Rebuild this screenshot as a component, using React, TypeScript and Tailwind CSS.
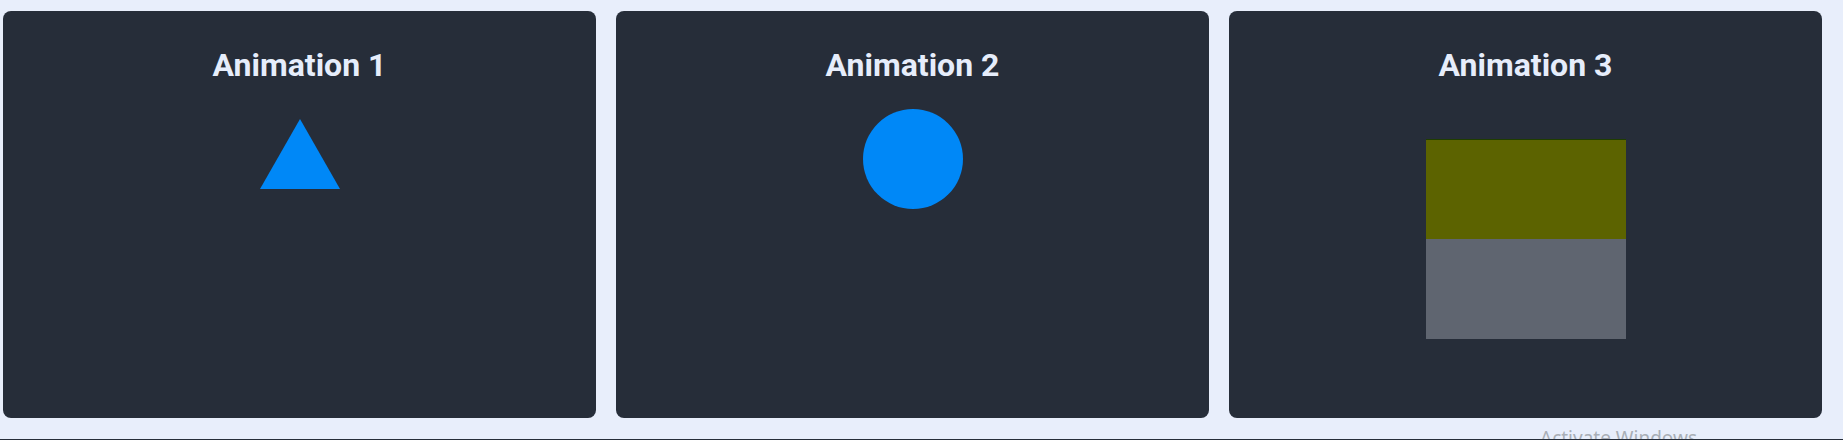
export default function App() {
  return (
    <div className="relative w-full h-[440px] overflow-hidden bg-[#e8eefb] font-['Roboto',sans-serif]">
      <div className="flex gap-[20px] pl-[3px] pr-[21px] pt-[11px]">
        {/* card 1 - triangle */}
        <div className="flex-1 h-[407px] rounded-lg bg-[#262d39] flex flex-col items-center pt-[36px]">
          <h2 className="text-[32px] leading-[36px] font-bold text-[#e6edfb]">Animation 1</h2>
          <div className="mt-[36px] w-0 h-0 border-l-[40px] border-r-[40px] border-b-[70px] border-l-transparent border-r-transparent border-b-[#0088f7]" />
        </div>

        {/* card 2 - circle */}
        <div className="flex-1 h-[407px] rounded-lg bg-[#262d39] flex flex-col items-center pt-[36px]">
          <h2 className="text-[32px] leading-[36px] font-bold text-[#e6edfb]">Animation 2</h2>
          <div className="mt-[26px] w-[100px] h-[100px] rounded-full bg-[#0088f7]" />
        </div>

        {/* card 3 - filling box */}
        <div className="flex-1 h-[407px] rounded-lg bg-[#262d39] flex flex-col items-center pt-[36px]">
          <h2 className="text-[32px] leading-[36px] font-bold text-[#e6edfb]">Animation 3</h2>
          <div className="mt-[56px] w-[200px] h-[200px] flex flex-col">
            <div className="h-[100px] bg-[#5c6300] border-t border-[#1f3d00]" />
            <div className="h-[100px] bg-[#5f6570]" />
          </div>
        </div>
      </div>

      <div className="absolute top-[429px] left-[1540px] text-[19px] leading-[19px] text-[#a9aeb6] font-['Noto_Sans',sans-serif] whitespace-nowrap">
        Activate Windows
      </div>
      <div className="absolute bottom-0 left-0 right-0 h-px bg-[#262d39]" />
    </div>
  );
}
